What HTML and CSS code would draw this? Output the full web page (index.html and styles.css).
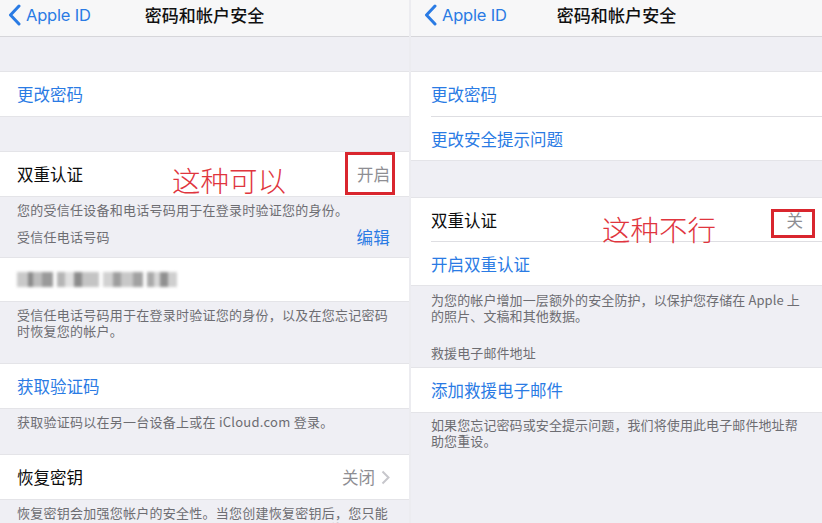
FILE: index.html
```html
<!DOCTYPE html>
<html lang="zh-CN">

<head>
    <meta charset="UTF-8">
    <meta name="viewport" content="width=device-width, initial-scale=1.0">
    <title>密码和帐户安全</title>
    <link rel="stylesheet" href="styles.css">
</head>

<body>
    <div class="screens">
        <!-- Left screenshot: two-factor already on -->
        <section class="phone phone-left">
            <header class="navbar">
                <a class="back">
                    <svg width="13" height="22" viewBox="0 0 13 22"><path d="M11 2 L2.5 11 L11 20" fill="none" stroke="currentColor" stroke-width="3" stroke-linecap="round" stroke-linejoin="round"/></svg>
                    <span>Apple ID</span>
                </a>
                <h1>密码和帐户安全</h1>
                <span></span>
            </header>

            <div class="spacer"></div>
            <div class="group">
                <div class="cell link">更改密码</div>
            </div>

            <div class="spacer spacer-36"></div>
            <div class="group">
                <div class="cell">
                    <span>双重认证</span>
                    <span class="detail">开启</span>
                </div>
            </div>
            <div class="note note-compact">
                <p>您的受信任设备和电话号码用于在登录时验证您的身份。</p>
                <div class="note-head">
                    <p>受信任电话号码</p>
                    <a class="edit">编辑</a>
                </div>
            </div>

            <div class="group">
                <div class="cell cell-43">
                    <span class="blurred">
                        <i class="b1"></i><i class="b2"></i><i class="b3"></i><i class="b4"></i>
                    </span>
                </div>
            </div>
            <div class="note">
                <p>受信任电话号码用于在登录时验证您的身份，以及在您忘记密码</p>
                <p>时恢复您的帐户。</p>
            </div>

            <div class="group">
                <div class="cell link">获取验证码</div>
            </div>
            <div class="note">
                <p>获取验证码以在另一台设备上或在 iCloud.com 登录。</p>
            </div>

            <div class="group">
                <div class="cell">
                    <span>恢复密钥</span>
                    <span class="detail">关闭
                        <svg width="9" height="15" viewBox="0 0 9 15"><path d="M1.5 1.5 L7.5 7.5 L1.5 13.5" fill="none" stroke="#c7c7cc" stroke-width="2"/></svg>
                    </span>
                </div>
            </div>
            <div class="note">
                <p>恢复密钥会加强您帐户的安全性。当您创建恢复密钥后，您只能</p>
                <p>使用已登录其他设备的 Apple ID 或输入恢复密钥来能重设</p>
            </div>

            <div class="mark mark-left"></div>
            <div class="remark remark-left">这种可以</div>
        </section>

        <!-- Right screenshot: two-factor still off -->
        <section class="phone phone-right">
            <header class="navbar">
                <a class="back">
                    <svg width="13" height="22" viewBox="0 0 13 22"><path d="M11 2 L2.5 11 L11 20" fill="none" stroke="currentColor" stroke-width="3" stroke-linecap="round" stroke-linejoin="round"/></svg>
                    <span>Apple ID</span>
                </a>
                <h1>密码和帐户安全</h1>
                <span></span>
            </header>

            <div class="spacer"></div>
            <div class="group">
                <div class="cell link">更改密码</div>
                <div class="cell link">更改安全提示问题</div>
            </div>

            <div class="spacer spacer-38"></div>
            <div class="group">
                <div class="cell cell-43">
                    <span>双重认证</span>
                    <span class="detail">关</span>
                </div>
                <div class="cell link">开启双重认证</div>
            </div>
            <div class="note note-wide">
                <p>为您的帐户增加一层额外的安全防护，以保护您存储在 Apple 上</p>
                <p>的照片、文稿和其他数据。</p>
                <p class="note-title">救援电子邮件地址</p>
            </div>

            <div class="group">
                <div class="cell link">添加救援电子邮件</div>
            </div>
            <div class="note note-tight">
                <p>如果您忘记密码或安全提示问题，我们将使用此电子邮件地址帮</p>
                <p>助您重设。</p>
            </div>

            <div class="mark mark-right"></div>
            <div class="remark remark-right">这种不行</div>
        </section>
    </div>
</body>

</html>
```

FILE: styles.css
```css
* {
    box-sizing: border-box;
}

body {
    margin: 0;
    overflow: hidden;
    background: #efeff4;
    font-family: Inter, "Noto Sans CJK SC", sans-serif;
}

p {
    margin: 0;
}

.screens {
    display: flex;
    gap: 2px;
    height: 523px;
    background: #ececf0;
}

.phone {
    position: relative;
    height: 523px;
    overflow: hidden;
    background: #efeff4;
    --inset: 17px;
}

.phone-left {
    width: 409px;
}

.phone-right {
    width: 411px;
    --inset: 20px;
}

/* Navigation bar */
.navbar {
    display: grid;
    grid-template-columns: 1fr auto 1fr;
    align-items: center;
    height: 37px;
    padding-bottom: 7px;
    background: #f7f7f8;
    border-bottom: 1px solid #d6d6da;
}

.back {
    display: flex;
    align-items: center;
    gap: 5px;
    margin-left: 8px;
    color: #2a7be4;
    font-size: 16.5px;
    letter-spacing: -0.2px;
}

.phone-right .back {
    margin-left: 13px;
}

.navbar h1 {
    margin: 0;
    font-family: "Noto Sans CJK SC", sans-serif;
    font-size: 17px;
    font-weight: 500;
    color: #111;
    letter-spacing: 0.1px;
}

/* Table groups */
.spacer {
    height: 35px;
}

.spacer-36 {
    height: 36px;
}

.spacer-38 {
    height: 38px;
}

.group {
    background: #fff;
    box-shadow: 0 -1px 0 #e4e4e8, 0 1px 0 #e4e4e8;
}

.cell {
    display: flex;
    align-items: center;
    justify-content: space-between;
    height: 44px;
    padding: 0 19px 0 var(--inset);
    font-family: "Noto Sans CJK SC", sans-serif;
    font-size: 16.5px;
    color: #0c0c0c;
}

.group .cell + .cell {
    border-top: 1px solid #dedee2;
    margin-left: var(--inset);
    padding-left: 0;
}

.cell-43 {
    height: 43px;
}

.cell.link {
    color: #2a7be4;
}

.detail {
    display: flex;
    align-items: center;
    gap: 6px;
    color: #8e8e93;
}

/* Footer notes */
.note {
    padding: 6px 12px 25px var(--inset);
    font-family: "Noto Sans CJK SC", sans-serif;
    font-size: 13px;
    line-height: 16px;
    color: #6d6d72;
    letter-spacing: 0.25px;
    white-space: nowrap;
}

.phone-right .note {
    letter-spacing: 0.1px;
}

.note-compact {
    padding-bottom: 10px;
}

.note-head {
    display: flex;
    align-items: center;
    justify-content: space-between;
    height: 22px;
    margin-top: 8px;
    padding-right: 7px;
}

.edit {
    color: #2a7be4;
    font-size: 16.5px;
}

.note-wide {
    padding-top: 7px;
    padding-bottom: 7px;
}

.note-title {
    margin-top: 21px;
}

.note-tight {
    padding-top: 5px;
}

/* Blurred phone number */
.blurred {
    display: flex;
    gap: 4px;
    filter: blur(1.6px);
}

.blurred i {
    display: block;
    height: 15px;
}

.b1 {
    width: 36px;
    background: linear-gradient(90deg, #c9c9c9 0 30%, #8a8a8a 30% 45%, #bdbdbd 45% 70%, #9a9a9a 70% 100%);
}

.b2 {
    width: 42px;
    background: linear-gradient(90deg, #b5b5b5 0 20%, #e0e0e0 20% 40%, #8c8c8c 40% 60%, #c4c4c4 60% 100%);
}

.b3 {
    width: 40px;
    background: linear-gradient(90deg, #d2d2d2 0 25%, #9e9e9e 25% 45%, #c8c8c8 45% 75%, #a2a2a2 75% 100%);
}

.b4 {
    width: 30px;
    background: linear-gradient(90deg, #a9a9a9 0 25%, #d8d8d8 25% 45%, #909090 45% 70%, #cfcfcf 70% 100%);
}

/* Red annotations laid over the screenshots */
.mark {
    position: absolute;
    border: 3px solid #d9262e;
}

.mark-left {
    left: 345px;
    top: 152px;
    width: 50px;
    height: 43px;
}

.mark-right {
    left: 360px;
    top: 209px;
    width: 44px;
    height: 29px;
}

.remark {
    position: absolute;
    font-family: "Noto Sans CJK SC", sans-serif;
    font-size: 28.5px;
    font-weight: 300;
    line-height: 1;
    color: #e0353e;
}

.remark-left {
    left: 172px;
    top: 166px;
}

.remark-right {
    left: 191px;
    top: 215px;
}
```
